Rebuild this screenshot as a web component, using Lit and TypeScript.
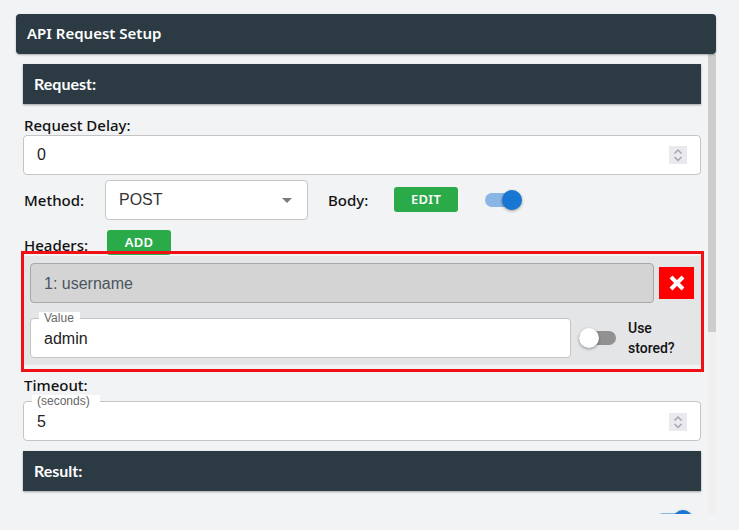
import { LitElement, html, css } from "lit";
import { customElement } from "lit/decorators.js";

@customElement("app-root")
export class AppRoot extends LitElement {
  static styles = css`
    :host { display: block; width: 739px; height: 530px; background: #f2f3f5; box-sizing: border-box; padding: 14px 23px 16px 16px; overflow: hidden; font-family: "Noto Sans", sans-serif; color: #111; }
    * { box-sizing: border-box; }
    .title { height: 40px; background: #2c3a44; border-radius: 4px; color: #fff; font: 600 15px/39px "Noto Sans", sans-serif; padding-left: 11px; box-shadow: 0 1px 2px rgba(0,0,0,.3); position: relative; z-index: 1; }
    .scroll { height: 460px; display: flex; overflow: hidden; }
    .content { width: 692px; padding: 10px 7px 0 7px; flex: none; }
    .track { width: 8px; background: #f0f0f0; flex: none; }
    .thumb { height: 278px; background: #cdcdcd; }
    .bar { height: 40px; background: #2c3a44; color: #fff; font: 700 16px/40px Lato, sans-serif; padding-left: 11px; box-shadow: 0 1px 2px rgba(0,0,0,.35); }
    .label { font-size: 15px; font-weight: 500; line-height: 19px; padding-left: 1px; }
    .delay { margin-top: 12px; height: 19px; }
    .field { height: 40px; background: #fff; border: 1px solid #c4c4c4; border-radius: 4px; display: flex; align-items: center; font: 16px/20px "Liberation Sans", sans-serif; color: #222; position: relative; }
    .num { padding: 0 13px 0 13px; justify-content: space-between; }
    .low { padding-top: 1px; }
    .spin { width: 18px; height: 18px; background: #e9e9ee; display: block; }
    .method { display: flex; align-items: center; margin-top: 5px; height: 40px; }
    .mlabel { width: 82px; }
    .select { width: 203px; padding: 0 15px 0 13px; justify-content: space-between; color: #333; }
    .caret { width: 0; height: 0; border: 5px solid transparent; border-top-color: #7a7a7a; border-bottom: 0; }
    .body { margin-left: 20px; width: 66px; padding-left: 0; }
    .btn { width: 64px; height: 25px; background: #2aaa48; color: #fff; border-radius: 3px; font: 600 13px/25px "Noto Sans", sans-serif; letter-spacing: .3px; text-align: center; }
    .edit { margin-top: -2px; }
    .switch { position: relative; width: 34px; height: 14px; border-radius: 7px; flex: none; }
    .switch i { position: absolute; top: -3px; width: 20px; height: 20px; border-radius: 50%; box-shadow: 0 1px 3px rgba(0,0,0,.4); }
    .on { background: #8ab6e6; margin-left: 27px; }
    .on i { left: 17px; background: #1976d2; }
    .off { background: #919191; width: 37px; }
    .off i { left: 0; background: #fff; }
    .headers { display: flex; align-items: flex-end; margin-top: 10px; height: 25px; }
    .hlabel { width: 84px; line-height: 18px; margin-bottom: 1px; }
    .item { margin-top: -1px; height: 115px; padding: 2px 0 4px; outline: 3px solid #f01015; margin-left: 1px; position: relative; }
    .grey { background: #e4e5e7; height: 109px; padding: 7px 7px 7px 6px; }
    .row1 { display: flex; align-items: center; gap: 5px; }
    .key { flex: 1; background: #d4d4d4; border: 1px solid #a8a8a8; color: #4a5560; padding: 1px 0 0 13px; }
    .x { width: 35px; height: 32px; background: #ff0000; display: flex; align-items: center; justify-content: center; }
    .row2 { display: flex; align-items: center; margin-top: 15px; }
    .val { width: 541px; padding: 1px 0 0 13px; color: #222; }
    .legend { position: absolute; left: 8px; top: -7px; background: #fff; padding: 0 6px 0 5px; font: 12px/12px "Liberation Sans", sans-serif; color: #666; }
    .sec { padding-right: 10px; }
    .row2 .switch { margin-left: 8px; }
    .stored { margin-left: 12px; font: 500 14px/20px Roboto, sans-serif; color: #111; width: 60px; }
    .timeout { margin-top: 7px; height: 25px; line-height: 19px; }
    .result { margin-top: 10px; }
    .last { display: flex; justify-content: flex-end; margin-top: 22px; padding-right: 11px; }
  `;

  private spin() {
    return html`<svg class="spin" viewBox="0 0 18 18" fill="none" stroke="#a5a5b0" stroke-width="1.5"><path d="M5.500 7.500 9 4l3.500 3.500"/><path d="M5.500 11 9 14.500 12.500 11"/></svg>`;
  }

  render() {
    return html`
      <div class="title">API Request Setup</div>
      <div class="scroll">
        <div class="content">
          <div class="bar">Request:</div>
          <div class="label delay">Request Delay:</div>
          <div class="field num">0 ${this.spin()}</div>
          <div class="method">
            <span class="label mlabel">Method:</span>
            <div class="field select">POST <span class="caret"></span></div>
            <span class="label body">Body:</span>
            <div class="btn edit">EDIT</div>
            <div class="switch on"><i></i></div>
          </div>
          <div class="headers"><span class="label hlabel">Headers:</span><div class="btn">ADD</div></div>
          <div class="item">
            <div class="grey">
              <div class="row1">
                <div class="field key">1: username</div>
                <div class="x"><svg width="16" height="16" viewBox="0 0 16 16" fill="none" stroke="#fff" stroke-width="4"><path d="M2 2 14 14M14 2 2 14"/></svg></div>
              </div>
              <div class="row2">
                <div class="field val"><span class="legend">Value</span>admin</div>
                <div class="switch off"><i></i></div>
                <div class="stored">Use stored?</div>
              </div>
            </div>
          </div>
          <div class="label timeout">Timeout:</div>
          <div class="field num low"><span class="legend sec">(seconds)</span>5 ${this.spin()}</div>
          <div class="bar result">Result:</div>
          <div class="last"><div class="switch on"><i></i></div></div>
        </div>
        <div class="track"><div class="thumb"></div></div>
      </div>
    `;
  }
}
